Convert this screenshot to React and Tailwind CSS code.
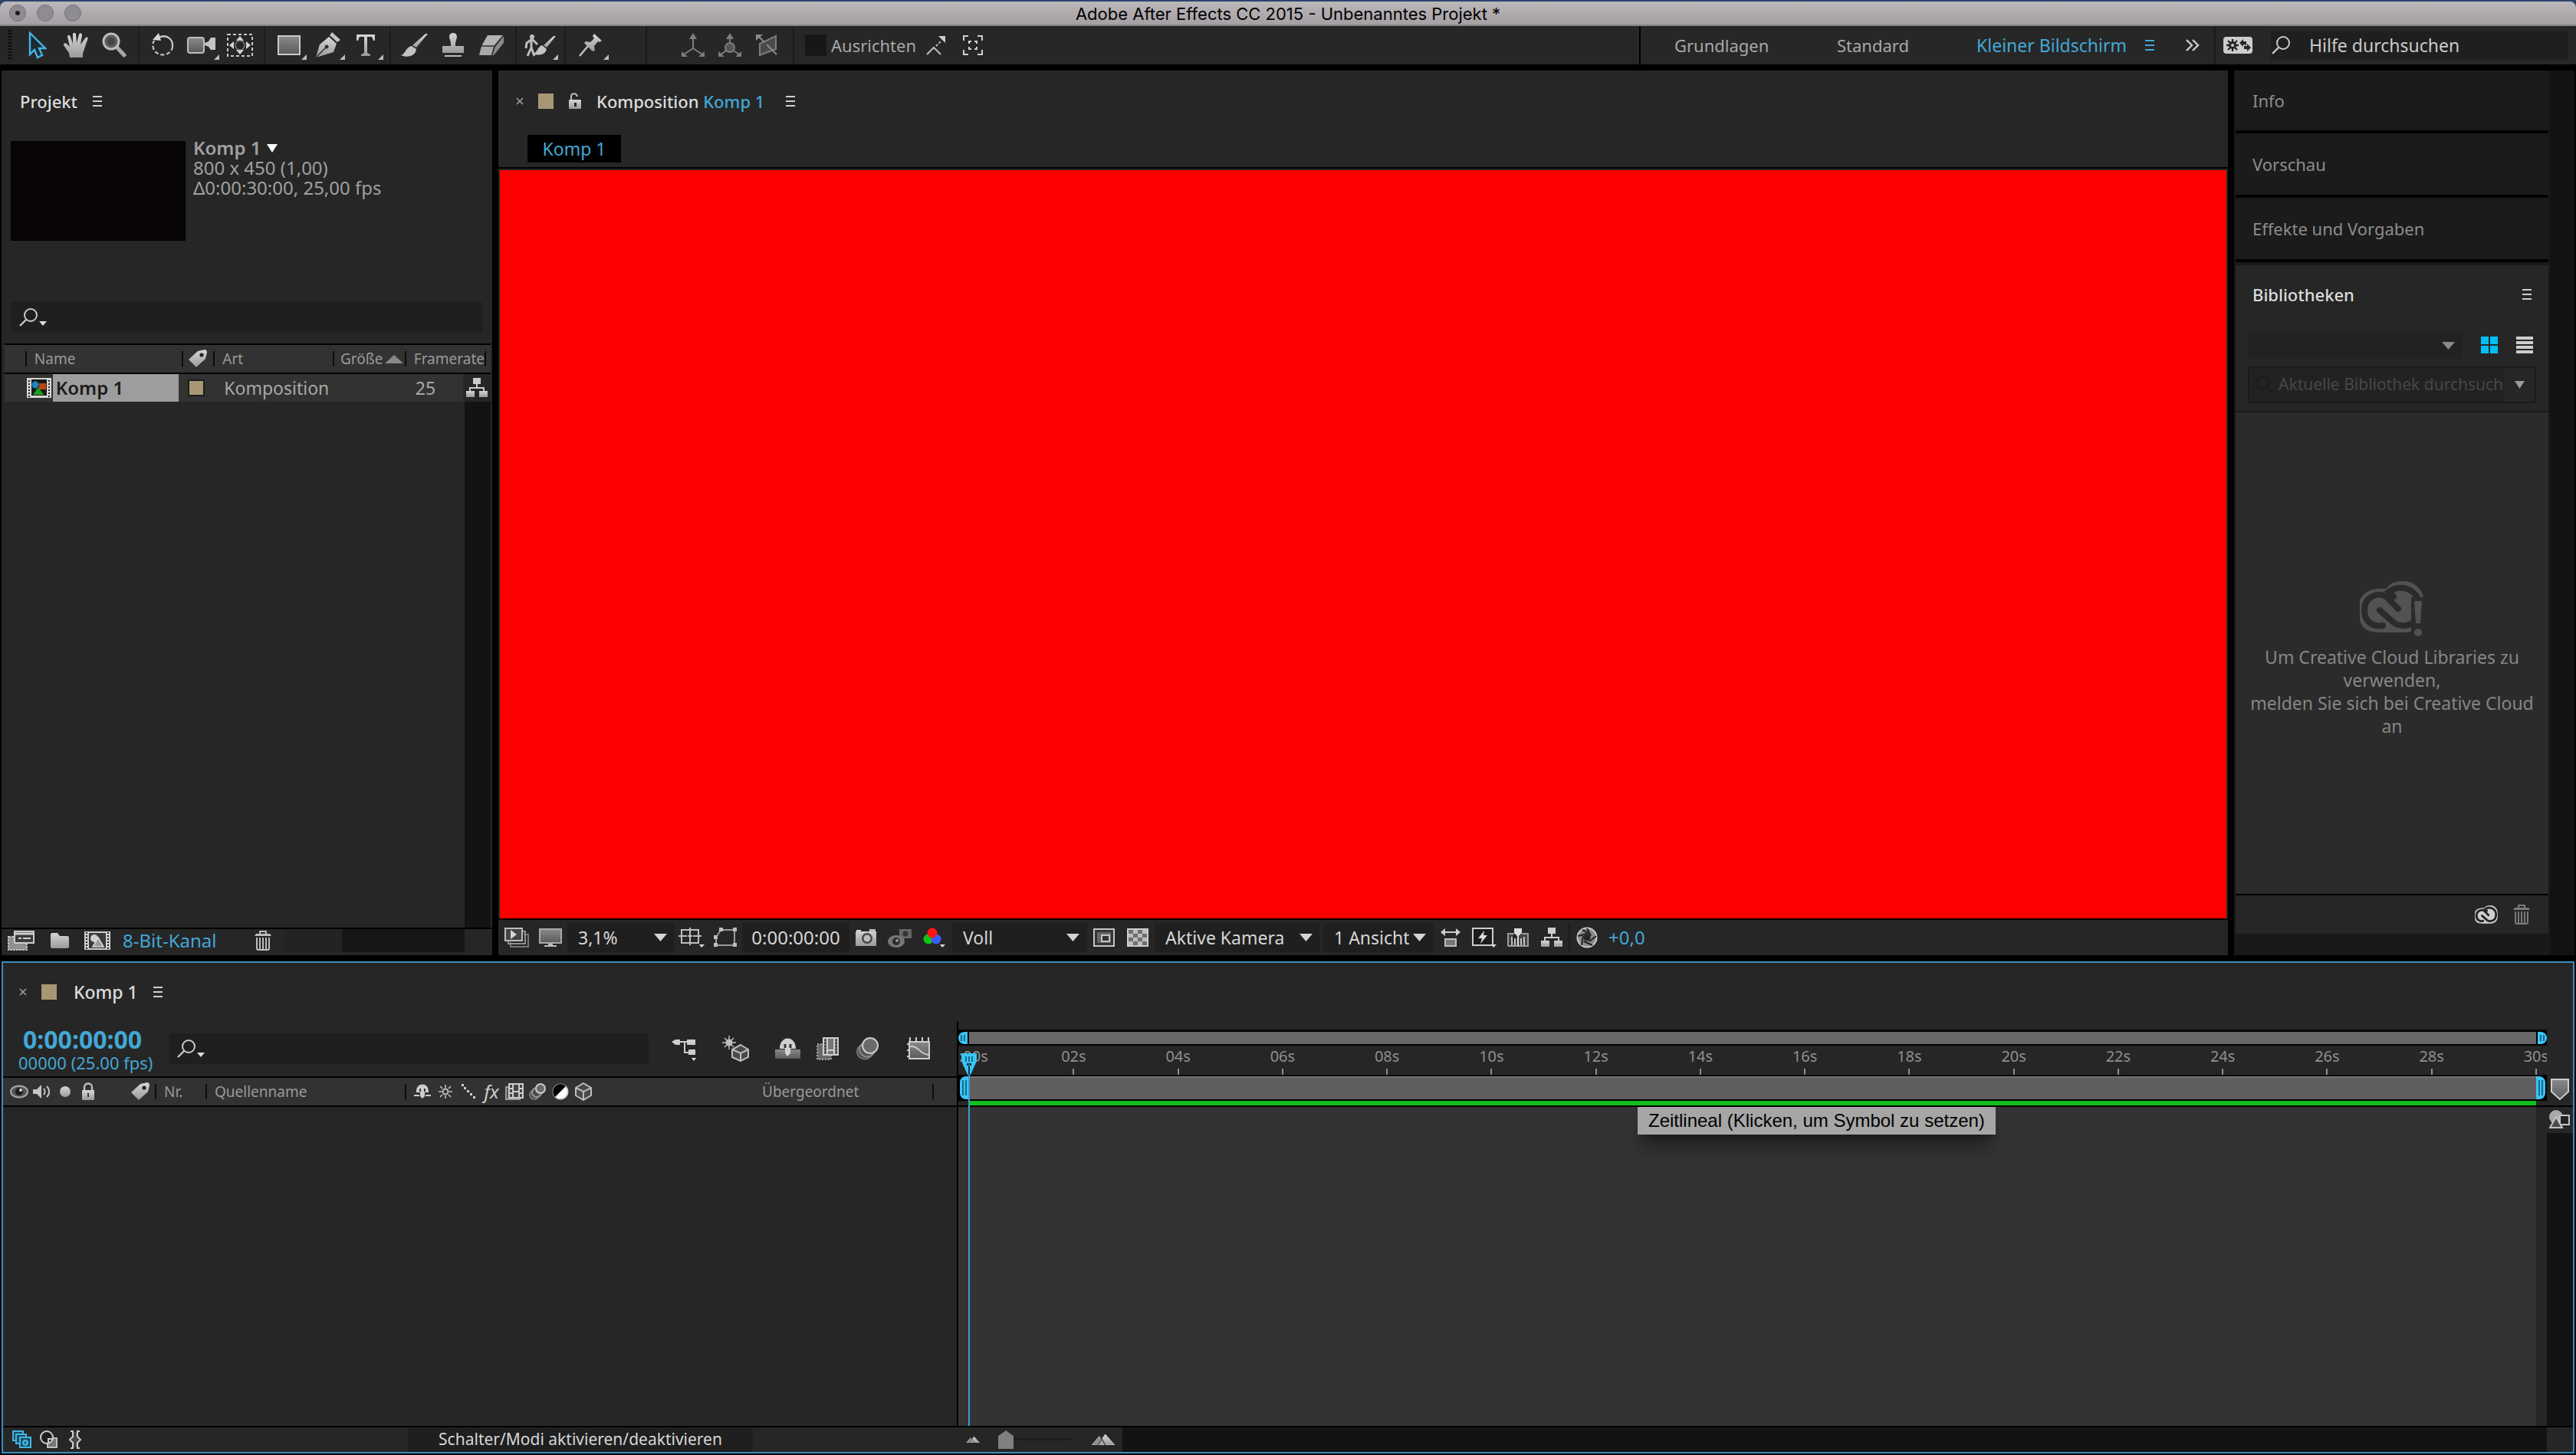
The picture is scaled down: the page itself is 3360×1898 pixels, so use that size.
import React from 'react';

const FONT = "font-['Noto_Sans','Open_Sans',sans-serif]";
const UI_FONT = "font-['Inter','Liberation_Sans',sans-serif]";

const TICKS = ['0:00s', '02s', '04s', '06s', '08s', '10s', '12s', '14s', '16s', '18s', '20s', '22s', '24s', '26s', '28s', '30s'];

function Svg({ w, h, className = '', children }) {
  return (
    <svg width={w} height={h} viewBox={`0 0 ${w} ${h}`} fill="#bdbdbd" className={`block shrink-0 ${className}`} aria-hidden="true">
      {children}
    </svg>
  );
}

function Gradients() {
  return (
    <svg className="absolute h-0 w-0" aria-hidden="true">
      <defs>
        <linearGradient id="steel" x1="0" y1="0" x2="0" y2="1">
          <stop offset="0" stopColor="#d6d6d6" />
          <stop offset="1" stopColor="#9a9a9a" />
        </linearGradient>
        <linearGradient id="dusk" x1="0" y1="0" x2="0" y2="1">
          <stop offset="0" stopColor="#8a8a8a" />
          <stop offset="1" stopColor="#5a5a5a" />
        </linearGradient>
      </defs>
    </svg>
  );
}

/* ---------- tool bar icons ---------- */

const SelectIcon = () => (
  <Svg w={24} h={36}>
    <path d="M2 2V30L8 24L12 34L18 31L14 22H22Z" fill="#1b2a33" stroke="#43b4e4" strokeWidth="2.4" />
  </Svg>
);

const HandIcon = () => (
  <Svg w={34} h={34}>
    <path
      fill="url(#steel)"
      d="M9 33L8 27L1 17C0 15 3 13 5 15L9 19L6 6C6 3 9 3 10 6L13 15L13 3C13 0 17 0 17 3L18 14L21 3C22 0 25 1 25 4L23 16L29 8C31 5 34 7 32 10L28 22L26 28V33Z"
    />
  </Svg>
);

const ZoomIcon = () => (
  <Svg w={32} h={34}>
    <path d="M18 18L29 30" stroke="#a8a8a8" strokeWidth="5" strokeLinecap="round" />
    <circle cx="12" cy="12" r="10" fill="#5c5c5c" stroke="#bcbcbc" strokeWidth="3" />
    <circle cx="12" cy="12" r="5" fill="#444" />
  </Svg>
);

const RotateIcon = () => (
  <Svg w={32} h={32}>
    <path d="M10 6C20 1 29 8 28 18" fill="none" stroke="#c4c4c4" strokeWidth="2.4" />
    <path d="M28 18C27 30 8 33 3 20C2 16 2 14 4 10" fill="none" stroke="#c4c4c4" strokeWidth="2.2" strokeDasharray="5 3" />
    <path d="M2 9L10 0L13 10Z" fill="#d6d6d6" />
  </Svg>
);

const CameraToolIcon = () => (
  <Svg w={38} h={24}>
    <rect x="1" y="2" width="21" height="20" rx="3" fill="url(#dusk)" stroke="#bdbdbd" strokeWidth="2" />
    <path d="M23 9L28 7L31 2H37V18H31L28 14L23 12Z" fill="#c4c4c4" />
  </Svg>
);

const PanBehindIcon = () => (
  <Svg w={34} h={30}>
    <rect x="1" y="1" width="32" height="28" fill="none" stroke="#c9c9c9" strokeWidth="2" strokeDasharray="4 3" />
    <path d="M17 3L22 9H12ZM17 27L22 21H12ZM3 15L9 10V20ZM31 15L25 10V20Z" fill="#d6d6d6" />
    <circle cx="17" cy="15" r="6" fill="none" stroke="#777" strokeWidth="1.5" />
  </Svg>
);

const RectIcon = () => (
  <Svg w={30} h={26}>
    <rect x="1" y="1" width="28" height="24" fill="url(#dusk)" stroke="#c9c9c9" strokeWidth="2" />
  </Svg>
);

const PenIcon = () => (
  <Svg w={36} h={34}>
    <path d="M21 4L24 0L35 10L31 13Z" fill="#c4c4c4" />
    <path d="M20 6L30 15L26 26L3 33L8 16Z" fill="url(#steel)" />
    <path d="M3 33L16 20" stroke="#333" strokeWidth="1.6" />
    <circle cx="17" cy="19" r="2.5" fill="#333" />
  </Svg>
);

const TypeIcon = () => (
  <Svg w={26} h={28}>
    <path d="M1 0H25V8H23L21 3H15V24L19 26V28H7V26L11 24V3H5L3 8H1Z" fill="url(#steel)" />
  </Svg>
);

const BrushIcon = () => (
  <Svg w={36} h={32}>
    <path d="M35 1L20 19L15 16L32 1Z" fill="url(#steel)" />
    <path d="M14 17L20 21C19 30 9 33 0 29C6 28 6 18 14 17Z" fill="#c2c2c2" />
  </Svg>
);

const StampIcon = () => (
  <Svg w={32} h={32}>
    <path d="M16 0C21 0 22 5 20 9C19 12 19 15 19 17H30V26H2V17H13C13 15 13 12 12 9C10 5 11 0 16 0Z" fill="url(#steel)" />
    <rect x="5" y="29" width="22" height="2" />
  </Svg>
);

const EraserIcon = () => (
  <Svg w={34} h={28}>
    <path d="M12 1H32L22 15H4Z" fill="#b4b4b4" />
    <path d="M4 15H21L17 27H1Z" fill="#a8a8a8" />
    <path d="M33 2V11L20 27H18L22 16Z" fill="#8a8a8a" />
    <path d="M4 15H21L32 2M21 15L18 26" fill="none" stroke="#303030" strokeWidth="1.5" />
  </Svg>
);

const RotoIcon = () => (
  <Svg w={42} h={30}>
    <circle cx="10" cy="4" r="3" />
    <path d="M10 7L3 12L2 19M10 7L17 14M9 8L9 18L4 29M9 18L13 29" fill="none" stroke="#bdbdbd" strokeWidth="3" />
    <path d="M41 3L29 18L25 15L38 3Z" fill="url(#steel)" />
    <path d="M23 15L29 20C27 28 19 29 11 26C17 25 17 17 23 15Z" fill="#c4c4c4" />
  </Svg>
);

const PinIcon = () => (
  <Svg w={32} h={30}>
    <path d="M20 0L30 9L27 11L25 10L20 16L21 22L18 23L7 12L9 10L15 11L20 6L18 3Z" fill="url(#steel)" />
    <path d="M12 16L1 29" stroke="#bdbdbd" strokeWidth="2.5" />
  </Svg>
);

const LocalAxisIcon = () => (
  <Svg w={34} h={32}>
    <path d="M17 6V20L5 28M17 20L29 28" fill="none" stroke="#7d7d7d" strokeWidth="2" />
    <path d="M17 0L22 8H12ZM2 24V31H10ZM32 24V31H24Z" fill="#7d7d7d" />
  </Svg>
);

const WorldAxisIcon = () => (
  <Svg w={34} h={32}>
    <path d="M17 6V20L5 28M17 20L29 28" fill="none" stroke="#7d7d7d" strokeWidth="2" />
    <path d="M17 0L22 8H12ZM2 24V31H10ZM32 24V31H24Z" fill="#7d7d7d" />
    <circle cx="17" cy="19" r="6" fill="#555" stroke="#7d7d7d" strokeWidth="2" />
  </Svg>
);

const ViewAxisIcon = () => (
  <Svg w={30} h={30}>
    <path d="M6 13L27 3V20L6 28Z" fill="#4a4a4a" stroke="#7d7d7d" strokeWidth="2" />
    <path d="M4 3L12 11M15 14L28 27" stroke="#8a8a8a" strokeWidth="2" />
    <path d="M1 1H10L1 9Z" fill="#8a8a8a" />
  </Svg>
);

const SnapIcon = () => (
  <Svg w={26} h={26}>
    <path d="M1 25L10 16L19 25" fill="none" stroke="#bdbdbd" strokeWidth="2" />
    <path d="M13 14L20 7" stroke="#bdbdbd" strokeWidth="2" strokeDasharray="3 2" />
    <path d="M16 1H25V10Z" fill="#d0d0d0" />
  </Svg>
);

const BoundsIcon = () => (
  <Svg w={26} h={26}>
    <path d="M1 7V1H7M19 1H25V7M25 19V25H19M7 25H1V19" fill="none" stroke="#cfcfcf" strokeWidth="2" />
    <path d="M8 11V8H11M15 8H18V11M18 15V18H15M11 18H8V15" fill="none" stroke="#cfcfcf" strokeWidth="2" />
  </Svg>
);

const SyncIcon = () => (
  <Svg w={38} h={22}>
    <rect width="38" height="22" rx="4" fill="#cdcdcd" />
    <path d="M12 3V19M4 11H20M6 5L18 17M18 5L6 17" stroke="#262626" strokeWidth="2.400" />
    <circle cx="12" cy="11" r="5" fill="#262626" />
    <circle cx="12" cy="11" r="2" fill="#cdcdcd" />
    <path d="M21 8L26 3V6H30V11H28V10H26V13ZM36 14L31 19V16H27V12H31V9Z" fill="#262626" />
  </Svg>
);

const MagnifierIcon = ({ menu }) => (
  <Svg w={38} h={26}>
    <circle cx="16" cy="10" r="8" fill="none" stroke="#c9c9c9" strokeWidth="2" />
    <path d="M10 16L2 24" stroke="#c9c9c9" strokeWidth="2.4" />
    {menu && <path d="M27 18H37L32 24Z" fill="#dcdcdc" />}
  </Svg>
);

/* ---------- panel icons ---------- */

const MenuIcon = ({ color = '#cfcfcf' }) => (
  <Svg w={12} h={14}>
    <path d="M0 1H12M0 7H12M0 13H12" stroke={color} strokeWidth="2" />
  </Svg>
);

const CloseIcon = () => (
  <Svg w={12} h={12}>
    <path d="M2 2L10 10M10 2L2 10" stroke="#a0a0a0" strokeWidth="1.6" />
  </Svg>
);

const OpenLockIcon = () => (
  <Svg w={16} h={22}>
    <path d="M3 10V5C3 0 10 0 11 5" fill="none" stroke="#bdbdbd" strokeWidth="2" />
    <rect y="9" width="16" height="12" rx="1" fill="url(#steel)" />
    <rect x="7" y="13" width="3" height="5" fill="#262626" />
  </Svg>
);

const LockIcon = () => (
  <Svg w={18} h={24}>
    <path d="M4 11V6C4 0 14 0 14 6V11" fill="none" stroke="#bdbdbd" strokeWidth="2.4" />
    <rect x="1" y="10" width="16" height="13" rx="1" fill="url(#steel)" />
    <rect x="8" y="14" width="2" height="5" fill="#333" />
  </Svg>
);

const TagIcon = () => (
  <Svg w={26} h={24}>
    <path d="M13 2L22 0C24 0 25 2 25 4L23 12L11 23L1 13Z" fill="url(#steel)" />
    <circle cx="18" cy="7" r="2.6" fill="#222" />
  </Svg>
);

const CompIcon = () => (
  <Svg w={32} h={26}>
    <rect width="32" height="26" fill="#d6d6d6" />
    <rect x="6" y="2" width="20" height="21" fill="#1a1a1a" />
    <path d="M3 3V25M29 3V25" stroke="#222" strokeWidth="2" strokeDasharray="2 2" />
    <circle cx="11" cy="9" r="4.5" fill="#1c86bd" />
    <rect x="16" y="7" width="9" height="8" fill="#bd4415" />
    <path d="M15 12L22 22H8Z" fill="#1fa01f" />
  </Svg>
);

const FlowIcon = () => (
  <Svg w={28} h={26}>
    <rect x="9" width="10" height="8" fill="#cdcdcd" />
    <path d="M14 8V13M5 18V13H23V18" fill="none" stroke="#cdcdcd" strokeWidth="2" />
    <rect y="17" width="11" height="8" fill="url(#steel)" />
    <rect x="17" y="17" width="11" height="8" fill="url(#steel)" />
  </Svg>
);

const FootageIcon = () => (
  <Svg w={36} h={26}>
    <rect x="1" y="8" width="24" height="17" fill="#8f8f8f" stroke="#bdbdbd" strokeWidth="2" strokeDasharray="3 1" />
    <rect x="9" y="1" width="25" height="15" fill="#3a3a3a" stroke="#cdcdcd" strokeWidth="2" />
    <path d="M10 4H33" stroke="#cdcdcd" strokeWidth="3" />
    <path d="M14 10H18M20 10H30" stroke="#cdcdcd" strokeWidth="2" />
  </Svg>
);

const FolderIcon = () => (
  <Svg w={24} h={20}>
    <path d="M0 2C0 1 1 0 2 0H9L12 4H22C23 4 24 5 24 6V18C24 19 23 20 22 20H2C1 20 0 19 0 18Z" fill="url(#steel)" />
  </Svg>
);

const NewCompIcon = () => (
  <Svg w={34} h={24}>
    <rect width="34" height="24" fill="#cdcdcd" />
    <rect x="6" y="2" width="22" height="20" fill="#3a3a3a" />
    <path d="M3 1V23M31 1V23" stroke="#222" strokeWidth="2" strokeDasharray="2 2" />
    <circle cx="13" cy="9" r="5" fill="#cdcdcd" />
    <path d="M18 8L25 20H11Z" fill="#9a9a9a" stroke="#ddd" strokeWidth="1.5" />
  </Svg>
);

const TrashIcon = ({ color = '#bdbdbd' }) => (
  <Svg w={22} h={26}>
    <path d="M7 4V1H15V4" fill="none" stroke={color} strokeWidth="2" />
    <path d="M0 7L2 4H20L22 7Z" fill={color} />
    <path d="M3 9V23C3 24 4 25 5 25H17C18 25 19 24 19 23V9M7 9V24M11 9V24M15 9V24" fill="none" stroke={color} strokeWidth="2" />
  </Svg>
);

const DropArrow = ({ color = '#d4d4d4', className = '' }) => (
  <Svg w={17} h={10} className={className}>
    <path d="M0 0H17L8.500 10Z" fill={color} />
  </Svg>
);

/* ---------- viewer bar icons ---------- */

const AlwaysPreviewIcon = () => (
  <Svg w={32} h={26}>
    <path d="M8 19V25H31V9H25" fill="none" stroke="#777" strokeWidth="2" />
    <path d="M5 17V21H27V5H23" fill="none" stroke="#8f8f8f" strokeWidth="2" />
    <rect x="1" y="1" width="22" height="16" fill="#444" stroke="#bdbdbd" strokeWidth="2" />
    <path d="M8 3L16 9L8 15Z" fill="#d6d6d6" />
  </Svg>
);

const MonitorIcon = () => (
  <Svg w={30} h={24}>
    <rect x="1" y="1" width="28" height="18" fill="url(#dusk)" stroke="#a8a8a8" strokeWidth="2" />
    <path d="M12 20H18V22H23V24H7V22H12Z" />
  </Svg>
);

const GridIcon = () => (
  <Svg w={34} h={26}>
    <rect x="4" y="3" width="22" height="17" fill="none" stroke="#bdbdbd" strokeWidth="2" />
    <path d="M15 0V9M15 14V23M0 11H11M19 11H30M12 11H18M15 9V14" stroke="#bdbdbd" strokeWidth="2" />
    <path d="M27 22H34L30 26Z" fill="#ddd" />
  </Svg>
);

const MaskIcon = () => (
  <Svg w={30} h={26}>
    <path d="M3 23V13L9 3H27V23Z" fill="none" stroke="#9a9a9a" strokeWidth="2" />
    <path d="M0 20H5V25H0ZM25 20H30V25H25ZM25 0H30V5H25ZM7 0H12V5H7ZM0 10H5V15H0Z" />
  </Svg>
);

const SnapshotIcon = () => (
  <Svg w={28} h={24}>
    <path d="M1 2H7V4H27V23H0V4H1Z" fill="url(#steel)" />
    <path d="M18 1H26V4H18Z" />
    <circle cx="15" cy="13" r="7" fill="#444" />
    <circle cx="15" cy="13" r="4.500" fill="#bdbdbd" />
  </Svg>
);

const ShowSnapshotIcon = () => (
  <Svg w={32} h={28}>
    <rect x="15" y="3" width="16" height="12" rx="1" fill="#666" />
    <circle cx="23" cy="9" r="3.500" fill="#333" />
    <ellipse cx="11" cy="19" rx="11" ry="8" fill="#777" />
    <circle cx="11" cy="19" r="5" fill="#2a2a2a" />
    <circle cx="12" cy="18" r="2" fill="#999" />
  </Svg>
);

const ChannelsIcon = () => (
  <Svg w={30} h={26}>
    <circle cx="8" cy="15" r="6.500" fill="#12c412" />
    <circle cx="18" cy="15" r="6.500" fill="#3a5cff" />
    <circle cx="13" cy="7" r="6.500" fill="#ff1414" />
    <path d="M23 22H30L26 26Z" fill="#ddd" />
  </Svg>
);

const RegionIcon = () => (
  <Svg w={28} h={24}>
    <rect x="1" y="1" width="26" height="22" fill="#333" stroke="#c4c4c4" strokeWidth="2" />
    <rect x="5" y="5" width="18" height="14" fill="#666" />
    <rect x="11" y="9" width="10" height="8" fill="#333" stroke="#c4c4c4" strokeWidth="2" />
  </Svg>
);

const CheckerIcon = () => (
  <Svg w={28} h={24}>
    <rect x="1" y="1" width="26" height="22" fill="#6f6f6f" stroke="#cdcdcd" strokeWidth="2" />
    <path d="M8 2H14V7H8ZM20 2H26V7H20ZM2 7H8V12H2ZM14 7H20V12H14ZM8 12H14V17H8ZM20 12H26V17H20ZM2 17H8V22H2ZM14 17H20V22H14Z" />
  </Svg>
);

const AspectIcon = () => (
  <Svg w={26} h={24}>
    <path d="M0 5L6 0V4H20V0L26 5L20 10V6H6V10Z" fill="#cdcdcd" />
    <rect x="6" y="14" width="14" height="9" fill="#777" stroke="#bdbdbd" strokeWidth="2" />
  </Svg>
);

const FastPreviewIcon = () => (
  <Svg w={32} h={26}>
    <rect x="1" y="1" width="26" height="22" fill="#1c1c1c" stroke="#cdcdcd" strokeWidth="2" />
    <path d="M16 4L8 14H13L11 21L20 10H15Z" fill="#dcdcdc" />
    <path d="M25 22H32L28 26Z" fill="#ddd" />
  </Svg>
);

const TimelineBtnIcon = () => (
  <Svg w={28} h={24}>
    <path d="M1 23V7H9M19 7H27V23H1" fill="#444" stroke="#9a9a9a" strokeWidth="2" />
    <path d="M6 11V22M10 13V22M18 13V22M22 11V22" stroke="#bdbdbd" strokeWidth="2" />
    <path d="M9 0H19V6L14 11L9 6Z" fill="#dcdcdc" />
    <path d="M14 10V23" stroke="#dcdcdc" strokeWidth="2" />
  </Svg>
);

const ShutterIcon = () => (
  <Svg w={28} h={28}>
    <circle cx="14" cy="14" r="12.500" fill="#8a8a8a" stroke="#cdcdcd" strokeWidth="2" />
    <path d="M14 2L19 12M26 12L17 19M21 24L10 19M7 24L9 12M2 12L14 9M8 4L19 10" stroke="#222" strokeWidth="2" />
    <circle cx="14" cy="14" r="4.500" fill="#262626" />
  </Svg>
);

/* ---------- timeline icons ---------- */

const MiniFlowIcon = () => (
  <Svg w={32} h={32}>
    <path d="M0 7L5 4H11V11H5ZM20 4H31V11H20ZM22 17H31V24H22Z" fill="#cdcdcd" />
    <path d="M11 7H20M17 7V21H22" fill="none" stroke="#cdcdcd" strokeWidth="2" />
    <path d="M26 28H32L29 32Z" fill="#ddd" />
  </Svg>
);

const Draft3dIcon = () => (
  <Svg w={36} h={34}>
    <circle cx="9" cy="9" r="4.500" />
    <path d="M9 0V18M0 9H18M3 3L15 15M15 3L3 15" stroke="#bdbdbd" strokeWidth="1.500" />
    <path d="M24 12L34 18V28L24 33L13 28V18Z" fill="#4a4a4a" stroke="#bdbdbd" strokeWidth="2" />
    <path d="M13 18L24 23L34 18M24 23V33" fill="none" stroke="#bdbdbd" strokeWidth="2" />
  </Svg>
);

const ShyHideIcon = () => (
  <Svg w={34} h={28}>
    <rect y="15" width="33" height="12" fill="url(#dusk)" />
    <path d="M6 14C6 -4 27 -4 27 14H20V20L16 24L13 20V14Z" fill="#d0d0d0" />
    <path d="M13 8V13M20 8V13" stroke="#333" strokeWidth="3" />
  </Svg>
);

const FrameBlendIcon = () => (
  <Svg w={30} h={30}>
    <rect x="1" y="9" width="18" height="20" fill="#6a6a6a" stroke="#aaa" strokeWidth="2" strokeDasharray="2 2" />
    <rect x="9" y="1" width="19" height="22" fill="#777" stroke="#cdcdcd" strokeWidth="2" />
    <path d="M14 1V23M23 1V23M14 17H23" stroke="#cdcdcd" strokeWidth="2" />
    <path d="M11.500 3V22M26 3V22" stroke="#333" strokeWidth="2" strokeDasharray="2 2" />
  </Svg>
);

const MotionBlurIcon = () => (
  <Svg w={30} h={30}>
    <ellipse cx="11" cy="19" rx="10" ry="9.500" fill="#4a4a4a" stroke="#707070" strokeWidth="2" />
    <ellipse cx="14" cy="16" rx="10" ry="9.500" fill="#555" stroke="#8a8a8a" strokeWidth="2" />
    <ellipse cx="18" cy="11" rx="10" ry="10" fill="#6a6a6a" stroke="#cdcdcd" strokeWidth="2" />
  </Svg>
);

const GraphIcon = () => (
  <Svg w={30} h={30}>
    <path d="M4 0V6M12 0V6M20 0V6M28 0V6M0 9H4M0 17H4M0 25H4" stroke="#cdcdcd" strokeWidth="2" />
    <rect x="3" y="6" width="26" height="22" fill="url(#dusk)" stroke="#cdcdcd" strokeWidth="2" />
    <path d="M4 12C16 11 16 22 28 23" fill="none" stroke="#cdcdcd" strokeWidth="2" />
  </Svg>
);

const EyeIcon = () => (
  <Svg w={24} h={18}>
    <ellipse cx="12" cy="9" rx="11" ry="7.500" fill="#555" stroke="#a8a8a8" strokeWidth="2" />
    <circle cx="12" cy="9" r="5" fill="#1d1d1d" />
    <circle cx="14" cy="7" r="2" fill="#ddd" />
  </Svg>
);

const SpeakerIcon = () => (
  <Svg w={24} h={20}>
    <path d="M0 7H5L11 1V19L5 13H0Z" fill="#c4c4c4" />
    <path d="M14 6C16 8 16 12 14 14M18 3C22 7 22 13 18 17" fill="none" stroke="#c4c4c4" strokeWidth="2" />
  </Svg>
);

const SoloIcon = () => (
  <Svg w={14} h={14}>
    <circle cx="7" cy="7" r="7" fill="url(#steel)" />
  </Svg>
);

const ShyIcon = () => (
  <Svg w={22} h={20}>
    <path d="M3 11C2 -3 20 -3 19 11H14V16L11 19L8 16V11Z" fill="#cdcdcd" />
    <path d="M8 6V10M14 6V10" stroke="#333" strokeWidth="2" />
    <path d="M0 15H7M15 15H22" stroke="#cdcdcd" strokeWidth="2" />
  </Svg>
);

const SunIcon = () => (
  <Svg w={18} h={18}>
    <circle cx="9" cy="9" r="3.500" fill="none" stroke="#bdbdbd" strokeWidth="2" />
    <path d="M9 0V4M9 14V18M0 9H4M14 9H18M2 2L5 5M13 13L16 16M16 2L13 5M5 13L2 16" stroke="#bdbdbd" strokeWidth="1.600" />
  </Svg>
);

const QualityIcon = () => (
  <Svg w={20} h={20}>
    <path d="M1 0H4V3H1ZM4 4H7V7H4ZM8 8H11V11H8ZM12 12H15V15H12ZM16 16H19V19H16Z" fill="#cdcdcd" />
  </Svg>
);

const BlendSmallIcon = () => (
  <Svg w={24} h={22}>
    <rect x="1" y="5" width="18" height="16" fill="#555" stroke="#9a9a9a" strokeWidth="2" />
    <rect x="5" y="1" width="18" height="18" fill="#444" stroke="#cdcdcd" strokeWidth="2" />
    <path d="M10 1V19M18 1V19M10 11H18M5 7H10M5 13H10M18 7H23M18 13H23" stroke="#cdcdcd" strokeWidth="2" />
  </Svg>
);

const BlurSmallIcon = () => (
  <Svg w={22} h={22}>
    <circle cx="7" cy="15" r="6" fill="#4a4a4a" stroke="#777" strokeWidth="2" />
    <circle cx="10" cy="12" r="6" fill="#4a4a4a" stroke="#999" strokeWidth="2" />
    <circle cx="15" cy="7" r="6" fill="#6a6a6a" stroke="#cdcdcd" strokeWidth="2" />
  </Svg>
);

const AdjustIcon = () => (
  <Svg w={22} h={22}>
    <circle cx="11" cy="11" r="9.500" fill="#fff" stroke="#d6d6d6" strokeWidth="2" />
    <path d="M18 4L4 18A9.500 9.500 0 0 1 18 4Z" fill="#000" />
  </Svg>
);

const CubeIcon = () => (
  <Svg w={24} h={24}>
    <path d="M12 1L22 7V17L12 23L2 17V7Z" fill="#4a4a4a" stroke="#bdbdbd" strokeWidth="2" />
    <path d="M2 7L12 12L22 7M12 12V23" fill="none" stroke="#bdbdbd" strokeWidth="2" />
  </Svg>
);

const MarkerIcon = () => (
  <Svg w={24} h={30}>
    <path d="M1 2H23V18L12 28L1 18Z" fill="url(#dusk)" stroke="#cdcdcd" strokeWidth="2" />
  </Svg>
);

const ShapesIcon = () => (
  <Svg w={28} h={26}>
    <circle cx="9" cy="9" r="9" fill="#a8a8a8" />
    <rect x="14" y="7" width="12" height="12" fill="#222" stroke="#c4c4c4" strokeWidth="2" />
    <path d="M9 9L17 23H1Z" fill="#4a4a4a" stroke="#c4c4c4" strokeWidth="2" />
  </Svg>
);

const LayersBlueIcon = () => (
  <Svg w={26} h={24}>
    <g fill="#1a4a60" stroke="#43b4e4" strokeWidth="2">
      <rect x="1" y="1" width="13" height="12" />
      <rect x="5" y="5" width="13" height="12" />
      <rect x="10" y="9" width="14" height="13" />
    </g>
    <circle cx="17" cy="16" r="4" fill="#43b4e4" />
    <circle cx="17" cy="16" r="1.500" fill="#1a4a60" />
  </Svg>
);

const TransferIcon = () => (
  <Svg w={24} h={24}>
    <rect x="10" y="10" width="12" height="12" fill="#777" stroke="#bdbdbd" strokeWidth="2" />
    <circle cx="9" cy="9" r="8" fill="#1f1f1f" stroke="#cdcdcd" strokeWidth="2" />
    <path d="M11 16V11H17" fill="none" stroke="#cdcdcd" strokeWidth="2" />
  </Svg>
);

const BracesIcon = () => (
  <Svg w={20} h={24}>
    <path d="M6 2H14V22H6Z" fill="#4a4a4a" />
    <path d="M4 1H7V8L3 12L7 16V23H4M16 1H13V8L17 12L13 16V23H16" fill="none" stroke="#cdcdcd" strokeWidth="2" />
  </Svg>
);

const MountainIcon = ({ w, h }) => (
  <svg width={w} height={h} viewBox="0 0 34 16" className="block shrink-0" aria-hidden="true">
    <path d="M0 16L11 3L20 16Z" fill="#8f8f8f" stroke="#bdbdbd" />
    <path d="M9 16L20 0L34 16Z" fill="url(#steel)" stroke="#ddd" />
    <path d="M9 16L15 7L20 16" fill="none" stroke="#444" strokeWidth="1.500" />
  </svg>
);

const CloudIcon = ({ w, h, color, back }) => (
  <svg width={w} height={h} viewBox="0 0 84 68" className="block shrink-0" aria-hidden="true">
    <path d="M26 10H34C40 2 48 0 58 0C72 1 84 12 84 28V44C82 60 72 67 58 67H26C10 67 0 60 0 48V26C2 16 14 10 26 10Z" fill={color} />
    <path
      d="M50 36L34 20C24 14 6 20 6 38C6 54 18 60 30 58M26 38L44 54C54 62 78 60 78 34C78 12 54 2 38 14L44 20"
      fill="none"
      stroke={back}
      strokeWidth="8"
      strokeLinecap="round"
    />
  </svg>
);

/* ---------- shared parts ---------- */

function Tool({ label, more, children }) {
  return (
    <button type="button" aria-label={label} className="relative flex h-full w-[50px] items-center justify-center">
      {children}
      {more && (
        <Svg w={7} h={7} className="absolute right-0.5 bottom-1.5">
          <path d="M7 0V7H0Z" />
        </Svg>
      )}
    </button>
  );
}

function ToolGroup({ children }) {
  return <div className="flex h-full border-r-2 border-[#1c1c1c] px-1.5">{children}</div>;
}

function Slot({ label, className = 'w-11', children }) {
  return (
    <button type="button" aria-label={label} className={`flex h-full shrink-0 items-center justify-center ${className}`}>
      {children}
    </button>
  );
}

function Dropdown({ label, value, className = '' }) {
  return (
    <div className={`relative h-[38px] shrink-0 bg-[#1f1f1f] ${className}`}>
      <select aria-label={label} defaultValue={value} className="h-full w-full appearance-none bg-transparent pr-8 pl-3.5 text-[23px] text-[#d6d6d6] outline-none">
        <option>{value}</option>
      </select>
      <DropArrow className="pointer-events-none absolute top-3.5 right-2.5" />
    </div>
  );
}

function Divider() {
  return <span className="h-5 w-0.5 shrink-0 bg-[#0c0c0c]" />;
}

/* ---------- window regions ---------- */

function TitleBar() {
  return (
    <div className="bg-[#2a466b] pt-0.5">
      <div className="flex h-8 items-center rounded-t-lg border-b-2 border-[#858585] bg-linear-to-b from-[#bcb7bb] to-[#a39fa3] px-3">
        <div className="flex w-24 gap-3.5">
          <span className="flex h-[22px] w-[22px] items-center justify-center rounded-full border border-[#757377] bg-[#8e8c90]">
            <span className="h-1.5 w-1.5 rounded-full bg-[#1c1c1c]" />
          </span>
          <span className="h-[22px] w-[22px] rounded-full border border-[#757377] bg-[#8e8c90]" />
          <span className="h-[22px] w-[22px] rounded-full border border-[#757377] bg-[#8e8c90]" />
        </div>
        <h1 className={`mr-24 flex-1 pt-0.5 text-center text-[22px] leading-7 text-black ${UI_FONT}`}>
          Adobe After Effects CC 2015 - Unbenanntes Projekt *
        </h1>
      </div>
    </div>
  );
}

function ToolBar() {
  return (
    <div className="flex h-[50px] items-center bg-[#272727] pl-2.5">
      <Svg w={6} h={40}>
        <path d="M3 0V40" stroke="#101010" strokeWidth="6" strokeDasharray="2 2" />
      </Svg>
      <div className="ml-0.5 h-full">
        <ToolGroup>
          <Tool label="Auswahl"><SelectIcon /></Tool>
          <Tool label="Hand"><HandIcon /></Tool>
          <Tool label="Zoom"><ZoomIcon /></Tool>
        </ToolGroup>
      </div>
      <ToolGroup>
        <Tool label="Drehung"><RotateIcon /></Tool>
        <Tool label="Kamera" more><CameraToolIcon /></Tool>
        <Tool label="Ausschnitt"><PanBehindIcon /></Tool>
      </ToolGroup>
      <ToolGroup>
        <Tool label="Rechteck" more><RectIcon /></Tool>
        <Tool label="Zeichenstift" more><PenIcon /></Tool>
        <Tool label="Text" more><TypeIcon /></Tool>
      </ToolGroup>
      <ToolGroup>
        <Tool label="Pinsel"><BrushIcon /></Tool>
        <Tool label="Kopierstempel"><StampIcon /></Tool>
        <Tool label="Radiergummi"><EraserIcon /></Tool>
      </ToolGroup>
      <ToolGroup>
        <Tool label="Roto-Pinsel" more><RotoIcon /></Tool>
      </ToolGroup>
      <div className="flex h-full w-[106px] border-r-2 border-[#1a1a1a] px-2">
        <Tool label="Marionette" more><PinIcon /></Tool>
      </div>
      <div className="flex h-full w-48 border-r-2 border-[#1c1c1c] pl-9">
        <Slot label="Lokale Achse" className="w-12"><LocalAxisIcon /></Slot>
        <Slot label="Weltachse" className="w-12"><WorldAxisIcon /></Slot>
        <Slot label="Ansichtsachse" className="w-12"><ViewAxisIcon /></Slot>
      </div>
      <label className="ml-3.5 flex items-center gap-1.5 text-[22px] text-[#a8a8a8]">
        <input type="checkbox" className="h-7 w-7 appearance-none bg-[#171717]" />
        Ausrichten
      </label>
      <Slot label="Kanten" className="ml-0.5 w-12"><SnapIcon /></Slot>
      <Slot label="Rahmen" className="w-12"><BoundsIcon /></Slot>

      <div className="ml-auto flex h-full items-center border-l-2 border-black pl-11 text-[22px]">
        <button type="button" className="w-[212px] text-left text-[#a8a8a8]">Grundlagen</button>
        <button type="button" className="w-[182px] text-left text-[#a8a8a8]">Standard</button>
        <button type="button" className="w-[220px] text-left text-[23px] whitespace-nowrap text-[#43a7d5]">Kleiner Bildschirm</button>
        <button type="button" aria-label="Arbeitsbereich-Menü"><MenuIcon color="#43a7d5" /></button>
        <button type="button" aria-label="Weitere Arbeitsbereiche" className="ml-10">
          <Svg w={20} h={16}>
            <path d="M2 1L9 8L2 15M10 1L17 8L10 15" fill="none" stroke="#cdcdcd" strokeWidth="2.4" />
          </Svg>
        </button>
        <div className="ml-4.5 flex h-full items-center border-l-2 border-[#1a1a1a] pl-2.5">
          <button type="button" aria-label="Einstellungen synchronisieren"><SyncIcon /></button>
        </div>
        <label className="mr-2.5 ml-6 flex h-[38px] w-[388px] items-center bg-[#1f1f1f]">
          <MagnifierIcon />
          <input type="text" aria-label="Hilfe durchsuchen" placeholder="Hilfe durchsuchen" className="ml-3 w-full bg-transparent text-[23px] outline-none placeholder:text-[#c9c9c9]" />
        </label>
      </div>
    </div>
  );
}

function ProjectPanel() {
  return (
    <section className="flex w-[640px] shrink-0 flex-col bg-[#262626]">
      <div className="flex h-20 items-center gap-5 pl-6 text-[22px] font-medium text-[#dcdcdc]">
        Projekt
        <button type="button" aria-label="Projekt-Menü"><MenuIcon /></button>
      </div>
      <div className="flex gap-2.5 pt-3 pl-3">
        <div className="h-[130px] w-[228px] border border-black bg-[#090505]" />
        <div className="text-[24px] leading-[26px] text-[#a0a0a0]">
          <p className="-mt-1 flex items-center gap-2 font-semibold">
            Komp 1
            <Svg w={14} h={11}><path d="M0 0H14L7 11Z" fill="#fff" /></Svg>
          </p>
          <p>800 x 450 (1,00)</p>
          <p>Δ0:00:30:00, 25,00 fps</p>
        </div>
      </div>
      <label className="mx-3 mt-20 flex h-10 items-center rounded-sm bg-[#1f1f1f] pl-2.5">
        <MagnifierIcon menu />
        <input type="text" aria-label="Projekt durchsuchen" className="w-full bg-transparent px-2 text-[22px] text-[#c9c9c9] outline-none" />
      </label>

      <table className="mt-3.5 mr-0.5 ml-1 table-fixed border-collapse text-left">
        <colgroup>
          <col className="w-[30px]" />
          <col className="w-[208px]" />
          <col className="w-[42px]" />
          <col className="w-[156px]" />
          <col className="w-[94px]" />
          <col className="w-[70px]" />
          <col className="w-[34px]" />
        </colgroup>
        <thead>
          <tr className="h-[38px] border-y-2 border-black bg-[#323232] text-[19px] text-[#9a9a9a]">
            <th className="p-0"><div className="flex justify-end"><Divider /></div></th>
            <th className="p-0 pl-2.5 font-normal"><div className="flex items-center justify-between">Name<Divider /></div></th>
            <th className="p-0 pl-1.5"><div className="flex items-center justify-between"><TagIcon /><Divider /></div></th>
            <th className="p-0 pl-2.5 font-normal"><div className="flex items-center justify-between">Art<Divider /></div></th>
            <th className="p-0 pl-2 font-normal">
              <div className="flex items-center justify-between">
                Größe
                <Svg w={24} h={11}><path d="M0 11L12 0L24 11Z" fill="#8a8a8a" /></Svg>
                <Divider />
              </div>
            </th>
            <th colSpan={2} className="p-0 pr-1.5 pl-2.5 font-normal"><div className="flex items-center justify-between">Framerate<Divider /></div></th>
          </tr>
        </thead>
        <tbody>
          <tr className="h-9 bg-[#323232] text-[23px] text-[#a8a8a8]">
            <td className="p-0" />
            <td className="p-0 pr-1.5">
              <div className="flex items-center">
                <CompIcon />
                <span className="ml-0.5 flex h-9 flex-1 items-center bg-[#9d9d9d] pl-1 text-[24px] font-semibold text-[#1c1c1c]">Komp 1</span>
              </div>
            </td>
            <td className="p-0 pl-1.5"><span className="block h-[22px] w-[22px] border-2 border-[#1c1c1c] bg-[#a89775]" /></td>
            <td className="p-0 pl-3">Komposition</td>
            <td className="p-0" />
            <td className="p-0 pl-3">25</td>
            <td className="bg-[#262626] p-0"><div className="flex justify-center"><FlowIcon /></div></td>
          </tr>
        </tbody>
      </table>
      <div className="mr-0.5 flex flex-1">
        <div className="flex-1" />
        <div className="w-[34px] bg-[#131313]" />
      </div>

      <div className="flex h-9 items-center border-t-2 border-black pb-1 pl-2">
        <button type="button" aria-label="Footage interpretieren"><FootageIcon /></button>
        <button type="button" aria-label="Neuer Ordner" className="ml-5"><FolderIcon /></button>
        <button type="button" aria-label="Neue Komposition" className="ml-5"><NewCompIcon /></button>
        <button type="button" className="ml-4 w-[172px] text-left text-[24px] leading-7 text-[#43a7d5]">8-Bit-Kanal</button>
        <button type="button" aria-label="Löschen"><TrashIcon /></button>
        <div className="mr-9 ml-auto flex h-full w-[236px] bg-[#161616]">
          <div className="h-full w-[76px] bg-[#232323]" />
        </div>
      </div>
    </section>
  );
}

function CompositionPanel() {
  return (
    <section className="flex min-w-0 flex-1 flex-col bg-[#262626]">
      <div className="flex h-20 items-center pl-[22px] text-[22px]">
        <button type="button" aria-label="Schließen"><CloseIcon /></button>
        <span className="ml-4.5 h-5 w-5 bg-[#a89775]" />
        <button type="button" aria-label="Sperren" className="ml-5"><OpenLockIcon /></button>
        <h2 className="ml-5 font-medium text-[#dcdcdc]">
          Komposition <span className="text-[#43a7d5]">Komp 1</span>
        </h2>
        <button type="button" aria-label="Kompositionsmenü" className="ml-7"><MenuIcon /></button>
      </div>
      <div className="flex h-[46px] items-start pt-1 pl-[38px]">
        <button type="button" className="h-9 w-[122px] bg-black text-[23px] leading-9 text-[#43a7d5]">Komp 1</button>
      </div>
      <div className="flex-1 border-y-2 border-black pt-0.5">
        <div className="mx-0.5 h-full bg-[#ff0000]" />
      </div>
      <div className="flex h-[46px] items-center pl-0.5">
        <Slot label="Immer Vorschau"><AlwaysPreviewIcon /></Slot>
        <Slot label="Primärer Viewer"><MonitorIcon /></Slot>
        <Dropdown label="Vergrößerung" value="3,1%" className="w-[140px]" />
        <Slot label="Raster"><GridIcon /></Slot>
        <Slot label="Masken"><MaskIcon /></Slot>
        <button type="button" className="h-[38px] w-[140px] shrink-0 bg-[#1f1f1f] text-[24px] leading-9 text-[#d6d6d6]">0:00:00:00</button>
        <Slot label="Schnappschuss"><SnapshotIcon /></Slot>
        <Slot label="Schnappschuss zeigen"><ShowSnapshotIcon /></Slot>
        <Slot label="Kanäle"><ChannelsIcon /></Slot>
        <Dropdown label="Auflösung" value="Voll" className="ml-0.5 w-44" />
        <Slot label="Relevanter Bereich"><RegionIcon /></Slot>
        <Slot label="Transparenzraster"><CheckerIcon /></Slot>
        <Dropdown label="3D-Ansicht" value="Aktive Kamera" className="w-[216px]" />
        <Dropdown label="Ansichtslayout" value="1 Ansicht" className="ml-1 w-36" />
        <Slot label="Pixelseitenverhältnis"><AspectIcon /></Slot>
        <Slot label="Schnelle Vorschau"><FastPreviewIcon /></Slot>
        <Slot label="Zeitleiste"><TimelineBtnIcon /></Slot>
        <Slot label="Flussdiagramm"><FlowIcon /></Slot>
        <span className="h-9 w-0.5 bg-[#1c1c1c]" />
        <Slot label="Belichtung zurücksetzen"><ShutterIcon /></Slot>
        <button type="button" className="ml-1.5 text-[24px] text-[#43a7d5]">+0,0</button>
      </div>
    </section>
  );
}

function LibrariesColumn() {
  return (
    <aside className="flex w-[444px] shrink-0 bg-[#131313]">
      <div className="flex w-[412px] flex-col bg-[#191919] px-0.5">
        {['Info', 'Vorschau', 'Effekte und Vorgaben'].map((name, i) => (
          <button
            key={name}
            type="button"
            className={`border-b-4 border-black bg-[#1b1b1b] pl-5.5 text-left text-[22px] text-[#8d8d8d] ${i === 0 ? 'h-[82px]' : 'h-21'}`}
          >
            {name}
          </button>
        ))}
        <section className="mt-1 mb-7 flex flex-1 flex-col bg-[#262626]">
          <div className="flex h-[76px] items-center justify-between pr-5.5 pl-5.5 text-[22px] font-medium text-[#dcdcdc]">
            Bibliotheken
            <button type="button" aria-label="Bibliotheken-Menü"><MenuIcon /></button>
          </div>
          <div className="flex items-center pt-2.5 pl-4">
            <div className="relative h-9 w-[280px] bg-[#222]">
              <select aria-label="Bibliothek" className="h-full w-full appearance-none bg-transparent outline-none" />
              <DropArrow color="#8a8a8a" className="pointer-events-none absolute top-3.5 right-2.5" />
            </div>
            <button type="button" aria-label="Symbolansicht" className="ml-6">
              <Svg w={22} h={22}><path d="M0 0H10V10H0ZM12 0H22V10H12ZM0 12H10V22H0ZM12 12H22V22H12Z" fill="#00bff3" /></Svg>
            </button>
            <button type="button" aria-label="Listenansicht" className="ml-6">
              <Svg w={22} h={22}><path d="M0 2H22M0 8H22M0 14H22M0 20H22" stroke="#cdcdcd" strokeWidth="4" /></Svg>
            </button>
          </div>
          <label className="mx-4 mt-2.5 flex h-12 items-center border-2 border-[#1a1a1a] bg-[#222] pl-2">
            <Svg w={24} h={24}>
              <circle cx="9" cy="9" r="8" fill="none" stroke="#1c1c1c" strokeWidth="2" />
              <path d="M15 15L22 22" stroke="#1c1c1c" strokeWidth="2" />
            </Svg>
            <input type="text" aria-label="Aktuelle Bibliothek durchsuchen" placeholder="Aktuelle Bibliothek durchsuchen" className="ml-1.5 w-[292px] bg-transparent text-[21px] outline-none placeholder:text-[#474747]" />
            <span className="ml-auto flex h-full w-10 items-center justify-center bg-[#262626]">
              <Svg w={13} h={10}><path d="M0 0H13L6.500 10Z" fill="#9a9a9a" /></Svg>
            </span>
          </label>
          <div className="mt-2.5 flex flex-1 flex-col items-center border-t-2 border-[#1a1a1a] bg-[#2b2b2b] pt-[220px]">
            <div className="relative">
              <CloudIcon w={84} h={68} color="#525252" back="#2b2b2b" />
              <Svg w={18} h={56} className="absolute -right-px -bottom-1.5">
                <path d="M0 3H18V56H0Z" fill="#2b2b2b" />
                <path d="M4 8H14L12 37H6Z" fill="#525252" />
                <circle cx="9" cy="49" r="5" fill="#525252" />
              </Svg>
            </div>
            <p className="mt-4 text-center text-[23px] leading-[30px] text-[#868686]">
              Um Creative Cloud Libraries zu<br />verwenden,<br />melden Sie sich bei Creative Cloud<br />an
            </p>
          </div>
          <div className="flex h-[52px] items-center justify-end gap-5 border-t-2 border-black pr-6">
            <button type="button" aria-label="Creative Cloud"><CloudIcon w={30} h={24} color="#cfcfcf" back="#262626" /></button>
            <button type="button" aria-label="Löschen"><TrashIcon color="#7a7a7a" /></button>
          </div>
        </section>
      </div>
    </aside>
  );
}

function LayerHeader() {
  return (
    <div className="flex h-10 items-center border-y-2 border-black bg-[#323232] text-[19px] text-[#9a9a9a]">
      <div className="flex w-[136px] items-center pl-1.5">
        <Slot label="Video" className="w-[30px]"><EyeIcon /></Slot>
        <Slot label="Audio" className="w-[30px]"><SpeakerIcon /></Slot>
        <Slot label="Solo" className="w-[30px]"><SoloIcon /></Slot>
        <Slot label="Schützen" className="w-[30px]"><LockIcon /></Slot>
        <span className="ml-auto"><Divider /></span>
      </div>
      <div className="flex w-16 items-center justify-end gap-1.5"><TagIcon /><Divider /></div>
      <div className="flex w-[66px] items-center justify-between pl-2.5">Nr.<Divider /></div>
      <div className="flex w-[260px] items-center justify-between pl-2.5">Quellenname<Divider /></div>
      <div className="flex w-[454px] items-center pl-1.5">
        <Slot label="Verbergen" className="w-[30px]"><ShyIcon /></Slot>
        <Slot label="Transformationen falten" className="w-[30px]"><SunIcon /></Slot>
        <Slot label="Qualität" className="w-[30px]"><QualityIcon /></Slot>
        <Slot label="Effekte" className="w-[30px]">
          <span className="text-[24px] leading-6 text-[#cdcdcd] italic">fx</span>
        </Slot>
        <Slot label="Frame-Überblendung" className="w-[30px]"><BlendSmallIcon /></Slot>
        <Slot label="Bewegungsunschärfe" className="w-[30px]"><BlurSmallIcon /></Slot>
        <Slot label="Einstellungsebene" className="w-[30px]"><AdjustIcon /></Slot>
        <Slot label="3D-Ebene" className="w-[30px]"><CubeIcon /></Slot>
        <span className="ml-auto"><Divider /></span>
      </div>
      <div className="flex w-[234px] items-center justify-between pl-2.5">Übergeordnet<Divider /></div>
    </div>
  );
}

function Handle({ side, tall }) {
  return (
    <span
      className={`flex shrink-0 items-center justify-center gap-0.5 bg-[#3bc4f5] ${side === 'left' ? 'rounded-l-lg' : 'rounded-r-lg'} ${tall ? 'h-[30px] w-3' : 'h-4 w-3'}`}
    >
      <span className={`w-0.5 bg-[#146a8c] ${tall ? 'h-5' : 'h-2'}`} />
      <span className={`w-0.5 bg-[#146a8c] ${tall ? 'h-5' : 'h-2'}`} />
    </span>
  );
}

function TimeArea() {
  return (
    <div className="relative flex min-w-0 flex-1 flex-col pt-2.5">
      <div className="flex border-t-2 border-[#1a1a1a] bg-black py-0.5">
        <Handle side="left" />
        <span className="ml-0.5 h-4 flex-1 bg-[#676767]" />
        <span className="w-0.5" />
        <Handle side="right" />
      </div>
      <div className="h-[38px] overflow-hidden">
        <div className="-mx-[54px] flex">
          {TICKS.map((t) => (
            <div key={t} className="flex h-[38px] flex-1 flex-col items-center justify-between pt-0.5 text-[20px] leading-6 text-[#8f8f8f]">
              {t}
              <span className="h-2 w-0.5 bg-[#8f8f8f]" />
            </div>
          ))}
        </div>
      </div>
      <div className="flex bg-black py-0.5 pl-0.5">
        <Handle side="left" tall />
        <span className="h-[30px] flex-1 border-t-2 border-[#727272] bg-[#5f5f5f]" />
        <Handle side="right" tall />
        <span className="w-0.5" />
      </div>
      <div className="flex h-2 border-b-2 border-black pl-3.5">
        <span className="mr-3.5 flex-1 bg-[#12bd1c]" />
      </div>
      <div className="flex flex-1">
        <span className="mr-3.5 flex-1 bg-[#333333]" />
      </div>

      {/* playhead */}
      <div className="absolute top-[42px] bottom-0 left-1 flex flex-col items-center">
        <Svg w={20} h={28}>
          <path d="M0 0H20V10L12 28H8L0 10Z" fill="#3bc4f5" />
          <path d="M6 4V11M10 4V11M14 4V11" stroke="#146a8c" strokeWidth="2" />
          <path d="M8 16V14H12V16M10 16V28" fill="none" stroke="#0e3b4e" strokeWidth="2" />
        </Svg>
        <span className="w-0.5 flex-1 bg-[#3d9bd0]" />
      </div>

      {/* hint */}
      <div
        role="tooltip"
        className="absolute top-28 left-[886px] bg-[#a6a6a6] px-3.5 font-['Liberation_Sans',Arial,sans-serif] text-[24px] leading-9 whitespace-nowrap text-black shadow-xl shadow-black/40"
      >
        Zeitlineal (Klicken, um Symbol zu setzen)
      </div>
    </div>
  );
}

function TimelinePanel() {
  return (
    <section className="mx-0.5 mb-0.5 flex h-[642px] shrink-0 flex-col border-2 border-[#3c8fbc] bg-[#262626]">
      <div className="flex h-[76px] shrink-0 items-center pl-5 text-[22px]">
        <button type="button" aria-label="Schließen"><CloseIcon /></button>
        <span className="ml-4.5 h-5 w-5 bg-[#a89775]" />
        <h2 className="ml-5.5 text-[23px] font-medium text-[#dcdcdc]">Komp 1</h2>
        <button type="button" aria-label="Zeitleistenmenü" className="ml-5"><MenuIcon /></button>
      </div>

      <div className="flex min-h-0 flex-1">
        <div className="flex w-[1246px] shrink-0 flex-col border-r-2 border-black">
          <div className="flex h-[72px] items-center pl-5 text-[#43a7d5]">
            <div className="flex w-[196px] flex-col">
              <button type="button" className="pl-1.5 text-left text-[32px] leading-9 font-bold">0:00:00:00</button>
              <span className="text-[22px] leading-6">00000 (25.00 fps)</span>
            </div>
            <label className="flex h-10 w-[626px] items-center bg-[#1f1f1f] pl-2.5">
              <MagnifierIcon menu />
              <input type="text" aria-label="Ebenen durchsuchen" className="w-full bg-transparent px-2 text-[22px] text-[#c9c9c9] outline-none" />
            </label>
            <div className="flex flex-1 items-center">
              <Slot label="Mini-Flussdiagramm" className="ml-5 w-13"><MiniFlowIcon /></Slot>
              <Slot label="3D-Entwurf" className="ml-2.5 w-16"><Draft3dIcon /></Slot>
              <Slot label="Verborgene Ebenen" className="ml-1.5 w-15"><ShyHideIcon /></Slot>
              <Slot label="Frame-Überblendung" className="w-11"><FrameBlendIcon /></Slot>
              <Slot label="Bewegungsunschärfe" className="w-15"><MotionBlurIcon /></Slot>
              <Slot label="Diagrammeditor" className="ml-2.5 w-13"><GraphIcon /></Slot>
            </div>
          </div>
          <LayerHeader />
          <div className="flex-1" />
        </div>
        <TimeArea />
        <div className="flex w-[34px] shrink-0 flex-col items-center pt-[74px]">
          <button type="button" aria-label="Marke"><MarkerIcon /></button>
          <button type="button" aria-label="Formen" className="mt-1.5 flex h-9 w-full items-center justify-center border-t-2 border-black"><ShapesIcon /></button>
          <div className="w-full flex-1 bg-[#131313]" />
        </div>
      </div>

      <div className="flex h-[34px] shrink-0 items-center border-t-2 border-black bg-[#131313]">
        <div className="flex h-full w-[1460px] items-center bg-[#262626] pl-3">
          <button type="button" aria-label="Ebenenschalter"><LayersBlueIcon /></button>
          <button type="button" aria-label="Transfermodi" className="ml-2.5"><TransferIcon /></button>
          <button type="button" aria-label="In/Out" className="ml-3"><BracesIcon /></button>
          <button type="button" className="ml-[424px] h-full w-[450px] bg-[#1f1f1f] text-[21px] text-[#d6d6d6]">Schalter/Modi aktivieren/deaktivieren</button>
          <span className="ml-[278px]"><MountainIcon w={18} h={8} /></span>
          <input
            type="range"
            aria-label="Zeitzoom"
            defaultValue={0}
            className="mx-6 h-6 w-24 appearance-none bg-linear-to-b from-transparent from-40% via-[#161616] via-40% to-transparent to-60% [&::-webkit-slider-thumb]:h-6 [&::-webkit-slider-thumb]:w-5 [&::-webkit-slider-thumb]:appearance-none [&::-webkit-slider-thumb]:bg-[#808080] [&::-webkit-slider-thumb]:[clip-path:polygon(50%_0,100%_30%,100%_100%,0_100%,0_30%)]"
          />
          <MountainIcon w={34} h={14} />
        </div>
        <div className="ml-auto h-full w-[34px] bg-[#262626]" />
      </div>
    </section>
  );
}

export default function App() {
  return (
    <div className={`flex h-screen flex-col bg-black ${FONT}`}>
      <Gradients />
      <TitleBar />
      <ToolBar />
      <main className="flex min-h-0 flex-1 gap-2 px-0.5 py-2">
        <ProjectPanel />
        <CompositionPanel />
        <LibrariesColumn />
      </main>
      <TimelinePanel />
    </div>
  );
}
